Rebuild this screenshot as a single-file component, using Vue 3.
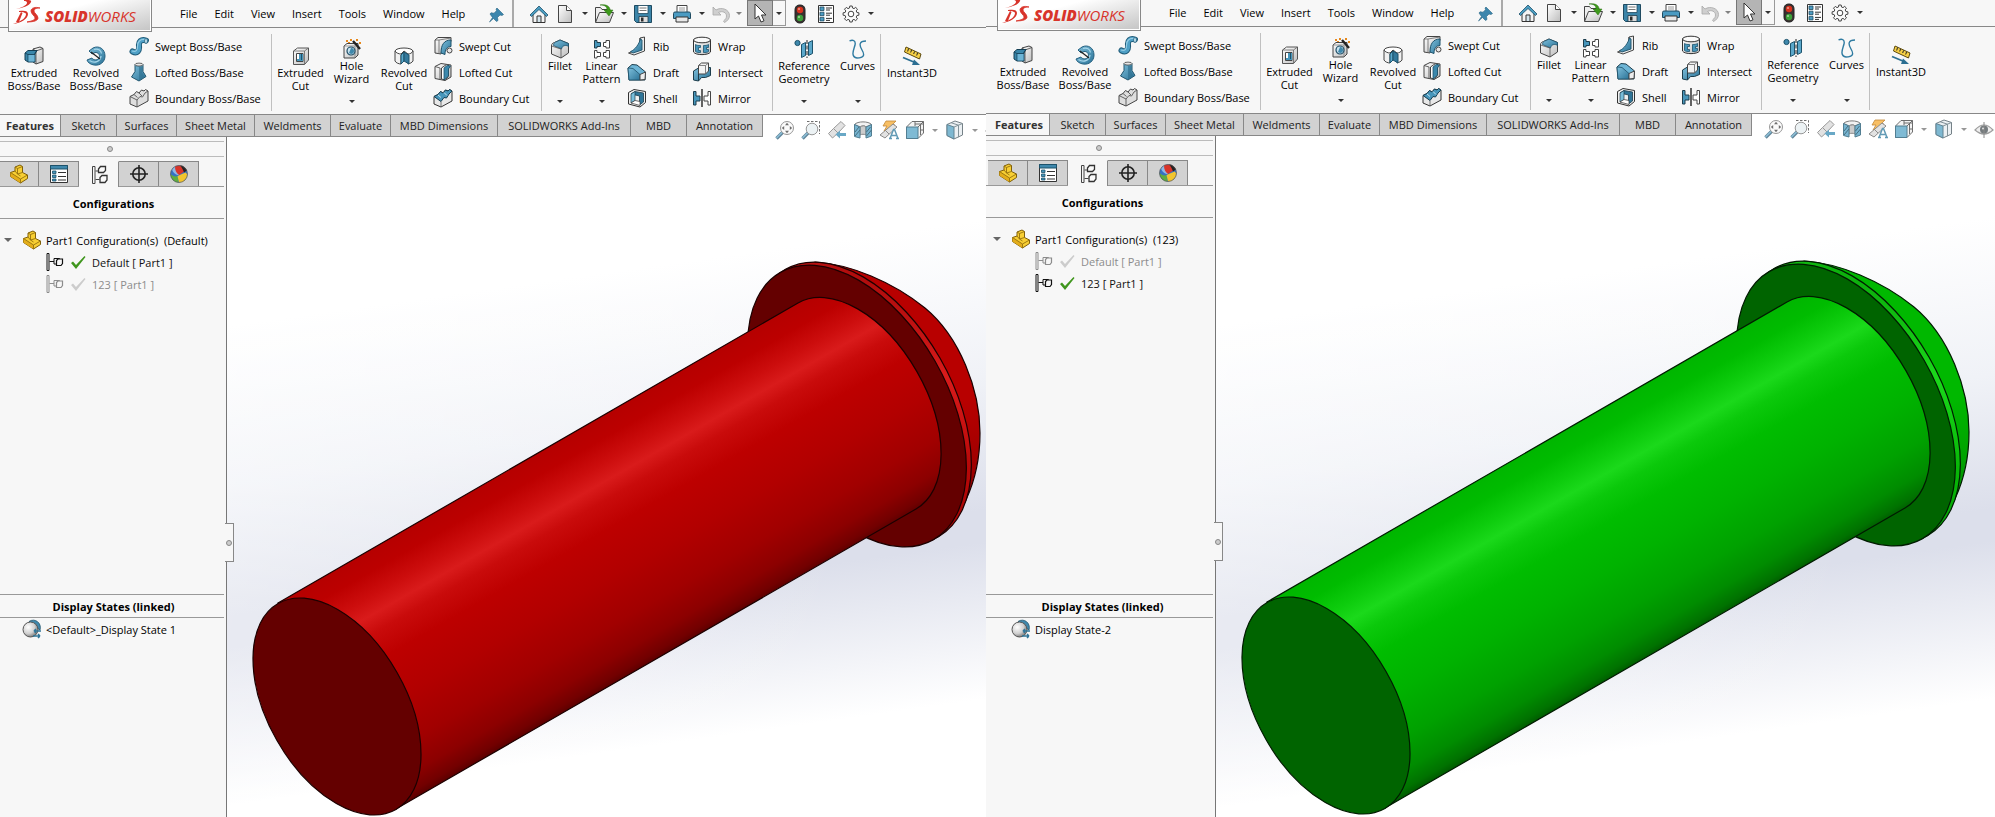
<script setup>
const menus = ['File', 'Edit', 'View', 'Insert', 'Tools', 'Window', 'Help']

const quick = [
  { icon: 'home', label: 'Home' },
  { icon: 'new', label: 'New', drop: true },
  { icon: 'open', label: 'Open', drop: true },
  { icon: 'save', label: 'Save', drop: true },
  { icon: 'print', label: 'Print', drop: true },
  { icon: 'undo', label: 'Undo', drop: true, off: true }
]

const ribbon = [
  {
    key: 'boss',
    items: [
      { icon: 'extrude', lines: ['Extruded', 'Boss/Base'] },
      { icon: 'revolve', lines: ['Revolved', 'Boss/Base'] },
      { list: [['sweep', 'Swept Boss/Base'], ['loft', 'Lofted Boss/Base'], ['boundary', 'Boundary Boss/Base']] }
    ]
  },
  {
    key: 'cut',
    items: [
      { icon: 'extrude-cut', lines: ['Extruded', 'Cut'] },
      { icon: 'hole', lines: ['Hole', 'Wizard'], drop: true },
      { icon: 'revolve-cut', lines: ['Revolved', 'Cut'] },
      { list: [['sweep-cut', 'Swept Cut'], ['loft-cut', 'Lofted Cut'], ['boundary-cut', 'Boundary Cut']] }
    ]
  },
  {
    key: 'feature',
    items: [
      { icon: 'fillet', lines: ['Fillet'], drop: true },
      { icon: 'pattern', lines: ['Linear', 'Pattern'], drop: true },
      { list: [['rib', 'Rib'], ['draft', 'Draft'], ['shell', 'Shell']] },
      { list: [['wrap', 'Wrap'], ['intersect', 'Intersect'], ['mirror', 'Mirror']] }
    ]
  },
  {
    key: 'reference',
    items: [
      { icon: 'geometry', lines: ['Reference', 'Geometry'], drop: true },
      { icon: 'curves', lines: ['Curves'], drop: true }
    ]
  },
  { key: 'instant', items: [{ icon: 'instant', lines: ['Instant3D'] }] }
]

const tabs = [
  ['features', 'Features'], ['sketch', 'Sketch'], ['surfaces', 'Surfaces'], ['sheet', 'Sheet Metal'],
  ['weld', 'Weldments'], ['evaluate', 'Evaluate'], ['dim', 'MBD Dimensions'],
  ['addins', 'SOLIDWORKS Add-Ins'], ['mbd', 'MBD'], ['annotation', 'Annotation']
]

const hud = [
  { icon: 'zoom-fit', label: 'Zoom to Fit' },
  { icon: 'zoom-area', label: 'Zoom to Area' },
  { icon: 'previous', label: 'Previous View' },
  { icon: 'section', label: 'Section View' },
  { icon: 'dynamic', label: 'Dynamic Annotation Views' },
  { icon: 'orient', label: 'View Orientation', drop: true },
  { icon: 'style', label: 'Display Style', drop: true },
  { icon: 'eye', label: 'Hide/Show Items' }
]

const panelTabs = [
  ['part', 'Feature Tree'], ['props', 'Property Manager'], ['config', 'Configuration Manager'],
  ['target', 'Dimension Manager'], ['ball', 'Display Manager']
]

const windows = [
  {
    id: 'red', current: 'Default', state: '<Default>_Display State 1',
    face: '#640000', line: '#1c0000', rim: '#b80808', dome: '#b80000', domeEnd: '#8c0000',
    stops: [[0, '#b60000'], [0.08, '#bc0000'], [0.17, '#cc0d0d'], [0.24, '#d91b1b'], [0.31, '#c90b0b'], [0.42, '#bd0000'], [0.6, '#b20000'], [0.78, '#a10000'], [0.9, '#8c0000'], [0.97, '#720000'], [1, '#5a0000']]
  },
  {
    id: 'green', current: '123', state: 'Display State-2',
    face: '#006400', line: '#001c00', rim: '#08b808', dome: '#00b800', domeEnd: '#008c00',
    stops: [[0, '#00b600'], [0.08, '#00bc00'], [0.17, '#0dcc0d'], [0.24, '#1bd91b'], [0.31, '#0bc90b'], [0.42, '#00bd00'], [0.6, '#00b200'], [0.78, '#00a100'], [0.9, '#008c00'], [0.97, '#007200'], [1, '#005a00']]
  }
]
const configs = ['Default', '123']
</script>

<template>
  <svg class="symbols" aria-hidden="true">
    <defs>
      <linearGradient id="blueFill" x1="0" y1="0" x2="1" y2="1">
        <stop offset="0" stop-color="#7fc0dc" /><stop offset="1" stop-color="#2b7397" />
      </linearGradient>
      <linearGradient id="greyFill" x1="0" y1="0" x2="1" y2="1">
        <stop offset="0" stop-color="#ffffff" /><stop offset="1" stop-color="#bdbdbd" />
      </linearGradient>
      <radialGradient id="sphere" cx=".35" cy=".35" r=".7">
        <stop offset="0" stop-color="#ffffff" /><stop offset=".6" stop-color="#d0d0d0" /><stop offset="1" stop-color="#777777" />
      </radialGradient>
    </defs>

    <symbol id="home" viewBox="0 0 20 20">
      <path d="M4 10v8.500h12V10l-6-6z" fill="#f4f4f4" stroke="#333" />
      <path d="M8 18v-6h4v6" fill="#d5e6ee" stroke="#333" />
      <path d="M1 11l9-9 9 9-1.500 1.500L10 5.500 2.500 12.500z" fill="#4a9cc0" stroke="#1d4f69" stroke-width=".8" />
    </symbol>
    <symbol id="new" viewBox="0 0 20 20">
      <path d="M3.500 1.500h8l5 5v12h-13z" fill="url(#greyFill)" stroke="#444" /><path d="M11.500 1.500v5h5" fill="#fff" stroke="#444" />
    </symbol>
    <symbol id="open" viewBox="0 0 20 20">
      <path d="M1.500 18V3.500h5l1.500 2h8V9" fill="#eee" stroke="#444" />
      <path d="M1.500 18.500l4-10h14l-4 10z" fill="url(#greyFill)" stroke="#444" />
      <path d="M6 1c4 0 7 1 7 5h-3l5 6 4-6h-3c0-4-4-6-10-5z" fill="#3e9a1c" stroke="#2b7012" stroke-width=".5" />
    </symbol>
    <symbol id="save" viewBox="0 0 20 20">
      <path d="M1.500 1.500h17v17H3.500l-2-2z" fill="#3b84a8" stroke="#1f4a60" />
      <path d="M5 1.500h10v8H5z" fill="#fff" stroke="#1f4a60" stroke-width=".8" /><path d="M6.500 4h7M6.500 6.500h7" stroke="#777" />
      <path d="M6 12.500h9v6H6z" fill="#ddd" stroke="#1f3a48" stroke-width=".8" /><path d="M8 13.500h2.500v4H8z" fill="#2a2a2a" />
    </symbol>
    <symbol id="print" viewBox="0 0 20 20">
      <path d="M5 9V1.500h10V9" fill="#fff" stroke="#444" /><path d="M7 4h6M7 6h6" stroke="#999" />
      <path d="M1.500 9.500q0-1.500 1.500-1.500h14q1.500 0 1.500 1.500v5h-17z" fill="#4b9bc2" stroke="#1f4a60" />
      <path d="M4 13h12v5H4z" fill="#e8e8e8" stroke="#333" />
    </symbol>
    <symbol id="undo" viewBox="0 0 20 20">
      <path d="M2 3v8h8L7.500 8.500c4-2 8 0 8 3.500 0 2-1 3.500-3 5l1 1.500c3-1.500 5-4 5-7C18.500 5.500 10.500 2.500 5 6z" fill="#cfcfcf" stroke="#a8a8a8" stroke-width=".8" />
    </symbol>
    <symbol id="cursor" viewBox="0 0 20 20">
      <path d="M5 1v15l3.500-3 2.500 6 3-1.200-2.500-5.800H16z" fill="#fff" stroke="#333" />
    </symbol>
    <symbol id="traffic" viewBox="0 0 20 20">
      <rect x="5" y="1" width="10" height="18" rx="4.500" fill="#3a3030" stroke="#222" />
      <circle cx="10" cy="6" r="3.200" fill="#d8321e" /><circle cx="10" cy="14" r="3.200" fill="#3ca13a" /><circle cx="9" cy="5" r="1" fill="#f09a8c" /><circle cx="9" cy="13" r="1" fill="#a4dca0" />
    </symbol>
    <symbol id="options" viewBox="0 0 20 20">
      <path d="M2.500 1.500h15v17h-15z" fill="#fff" stroke="#333" /><path d="M4 3h4v3.500H4zM4 8.200h4v3.500H4zM4 13.400h4v3.500H4z" fill="#4b9bc2" stroke="#1f4a60" stroke-width=".8" />
      <path d="M10 4h6M10 6h4M10 9.200h6M10 11.200h4M10 14.400h6M10 16.400h4" stroke="#333" />
    </symbol>
    <symbol id="gear" viewBox="0 0 20 20">
      <path d="M8.500 4l.3-2h2.400l.3 2 1.500.6 1.700-1.200 1.800 1.800-1.300 1.700.7 1.600 2 .3v2.400l-2 .3-.7 1.600 1.300 1.700-1.800 1.800-1.700-1.200-1.500.6-.3 2H8.800l-.3-2-1.500-.6-1.700 1.200-1.800-1.800 1.300-1.700-.7-1.600-2-.3V8.800l2-.3.7-1.600-1.300-1.700 1.800-1.800L7 4.600z" fill="#fbfbfb" stroke="#444" />
      <circle cx="10" cy="10" r="2.800" fill="#fff" stroke="#444" />
    </symbol>
    <symbol id="pin" viewBox="0 0 20 20">
      <path d="M10 4l6.500 6.500-1.500 1-2-.5-2.500 2.500.5 3-1.500 1-3-3-4 3.500 3-4.500L3 10l1-1.200 3 .4 2.500-2.500L9 5z" fill="#3c86ad" stroke="#286583" stroke-width=".6" />
    </symbol>

    <symbol id="extrude" viewBox="0 0 20 20">
      <path d="M9 3l7-2 3 1.500v13L12 18l-3-2z" fill="url(#greyFill)" stroke="#444" /><path d="M12 18V5l7-2.500M12 5L9 3" fill="none" stroke="#444" stroke-width=".8" />
      <path d="M1 7l3-2.500h9L11 7v9H4l-3-2z" fill="#3a87ab" stroke="#153f54" /><path d="M1 7l3 1.500h7M4 8.500V16M11 8l2-3.500" fill="none" stroke="#153f54" stroke-width=".8" /><path d="M4.500 9h6v6.500h-6z" fill="#6db5d6" />
    </symbol>
    <symbol id="revolve" viewBox="0 0 20 20">
      <path d="M7 2C13-1 19 3 19 10c0 6-5 10-11 9-4-.5-6.500-3-7-5l5-2c1 2 5 3 7 0 1.500-3-1-6-4-5.500L6 8 3 5z" fill="url(#blueFill)" stroke="#246080" />
      <path d="M3.500 14.500c5 3.500 11 1 11.500-4.500M8 3.500c4-1.500 7 1 7.500 4" fill="none" stroke="#a6d6ea" stroke-width="1.300" /><path d="M5 6l9 7" stroke="#222" stroke-width="1.300" />
    </symbol>
    <symbol id="sweep" viewBox="0 0 20 20">
      <path d="M3.500 15.500c5 2.500 7-1 6.500-5.500S12 3 17 4.500" fill="none" stroke="#1f5b78" stroke-width="6" stroke-linecap="round" />
      <path d="M3.500 15.500c5 2.500 7-1 6.500-5.500S12 3 17 4.500" fill="none" stroke="#4fa0c6" stroke-width="4" stroke-linecap="round" />
      <path d="M3 15c4 1.500 5.500-1 5.500-5S11 2.800 16 3.500" fill="none" stroke="#94cce4" stroke-width="1.200" /><ellipse cx="17" cy="5" rx="1.500" ry="2.500" fill="#bfe0ee" stroke="#1f5b78" stroke-width=".7" />
    </symbol>
    <symbol id="loft" viewBox="0 0 20 20">
      <path d="M6 2.500v7L2.500 15 10 19l7-4.500L14 9.500v-7z" fill="url(#blueFill)" stroke="#22566f" /><ellipse cx="10" cy="2.600" rx="4" ry="1.500" fill="#e6e6e6" stroke="#444" stroke-width=".8" />
      <path d="M10 5v13.500L15.500 15 13 10V4.500z" fill="#2c6c8c" opacity=".6" />
    </symbol>
    <symbol id="boundary" viewBox="0 0 20 20">
      <path d="M1 8.500l4-2 2.500-3L10 5l2.500-3L15 3l1.500-1.500L19 3v10L8 19l-7-3z" fill="#dedede" stroke="#444" />
      <path d="M1 8.500L8 12l3-3.500 2.500.5 2.500-4 3-2M8 12v7M5 6.500l3.500 3M10 5l3 3" fill="none" stroke="#555" stroke-width=".9" />
    </symbol>
    <symbol id="boundary-cut" viewBox="0 0 20 20">
      <path d="M1 8.500l4-2 2.500-3L10 5l2.500-3L15 3l1.500-1.500L19 3v10L8 19l-7-3z" fill="#e8e8e8" stroke="#333" />
      <path d="M1 8.500l4-2 2.500-3L10 5l2.500-3L15 3l1.500-1.500L19 3l-3 3-2.500 4-2.500-.5-3 4z" fill="#4796bb" stroke="#173f52" />
      <path d="M5 7l3 2.500M11 4.500l3 3" stroke="#c6e4f1" /><path d="M8 13.500V19" fill="none" stroke="#555" stroke-width=".8" />
    </symbol>
    <symbol id="extrude-cut" viewBox="0 0 20 20">
      <path d="M2.500 5l4-3h11v12l-4 4.500h-11z" fill="url(#greyFill)" stroke="#555" /><path d="M2.500 5h11v13.500M13.500 5l4-3" fill="none" stroke="#666" stroke-width=".8" />
      <path d="M5.500 7.500h6.500v8H5.500z" fill="#fff" stroke="#444" /><path d="M8 8v5H6v2h6V8z" fill="#4796bb" /><path d="M10.500 8v6" stroke="#1e526b" />
    </symbol>
    <symbol id="hole" viewBox="0 0 20 20">
      <path d="M2 7l3-2.500h11V16l-3 3H2z" fill="url(#greyFill)" stroke="#444" /><path d="M2 7h11v12" fill="none" stroke="#777" stroke-width=".7" />
      <circle cx="9" cy="12" r="4" fill="#c9e3ef" stroke="#1e4d66" stroke-width="1.200" /><path d="M9 9a3 3 0 010 6l-2-1z" fill="#3f88ac" />
      <path d="M11 2l7 8" stroke="#222" stroke-width="2.400" /><path d="M4 1h2v2H4zM8 0h2v2H8zM14 0h2v2h-2zM17 3h2v2h-2zM6 3h2v1H6z" fill="#e8891c" />
    </symbol>
    <symbol id="revolve-cut" viewBox="0 0 20 20">
      <path d="M1 5v10c1 2 4 3 6 3V9l3-3 4 3v9c2-.5 4-1.500 5-3V5z" fill="#f1f1f1" stroke="#444" /><path d="M1 5c1-4 17-4 18 0-1 2-3 3-5 3l-4-3-3 3C5 8 2 7 1 5z" fill="#fff" stroke="#444" />
      <path d="M7 9l3-3v9l-3 3z" fill="#5aa9cc" stroke="#1d526b" /><path d="M10 6l5 3v9l-5-3z" fill="#33799c" stroke="#1d526b" />
    </symbol>
    <symbol id="sweep-cut" viewBox="0 0 20 20">
      <path d="M2 4l3-2.500h13v4l-4 2-5 5-1 5.500-6-1z" fill="url(#greyFill)" stroke="#444" /><path d="M2 4h4v14M6 4l12-2" fill="none" stroke="#666" stroke-width=".8" />
      <path d="M18 4c-7 0-10 5-10 13l4 1.500c0-5 2-8 6-8z" fill="url(#blueFill)" stroke="#1d526b" /><circle cx="16.500" cy="14.500" r="2.500" fill="#e8e8e8" stroke="#444" />
    </symbol>
    <symbol id="loft-cut" viewBox="0 0 20 20">
      <path d="M2 4.500l6-3 10 1.500v12l-6 3.500-10-2z" fill="url(#greyFill)" stroke="#444" /><path d="M2 4.500l5 1.500v12M12 6v12" fill="none" stroke="#555" stroke-width=".9" />
      <path d="M8.500 6l5-3.500 2 .500v11l-3 4-4-1z" fill="#fff" stroke="#444" /><path d="M11 6l3-2.500 3.500.5-2 3v7L11 18z" fill="#3c88ac" stroke="#1d526b" stroke-width=".8" />
    </symbol>
    <symbol id="fillet" viewBox="0 0 20 20">
      <path d="M1.500 7c0-2 1-3 3-3.500L10 1l8.500 3.500V14L11 19l-9.500-4z" fill="url(#greyFill)" stroke="#444" />
      <path d="M7 2.500L10 1l8.500 3.500v3C16 5.500 12 6.500 11.500 10l-8-3.500C3.500 4 5 3 7 2.500z" fill="url(#blueFill)" stroke="#1d526b" stroke-width=".8" /><path d="M11 19v-9L1.500 7" fill="none" stroke="#555" stroke-width=".8" />
    </symbol>
    <symbol id="pattern" viewBox="0 0 20 20">
      <path d="M2.500 1.500H5v2h3.500v4H5v1.500H2.500z" fill="#4796bb" stroke="#1d3d4c" />
      <path d="M11.500 3.500H14v-2h3.500V9H14V7.500h-2.500zM2.500 11.500H5v2h3.500v4H5v1.500H2.500zM11.500 13.500H14v-2h3.500V19H14v-1.500h-2.500z" fill="#fff" stroke="#444" />
    </symbol>
    <symbol id="rib" viewBox="0 0 20 20">
      <path d="M13 2l4.500-1v14L7 19l-5.500-2L13 13z" fill="#ececec" stroke="#444" /><path d="M13 2v11" stroke="#444" />
      <path d="M13.500 3L15 4v10l-9 3-2.500-1.500C8 14 12 8 13.500 3z" fill="url(#blueFill)" stroke="#1d526b" stroke-width=".9" />
    </symbol>
    <symbol id="draft" viewBox="0 0 20 20">
      <path d="M1 6l4-3.500 5 .5 8.500 7-.5 8H2z" fill="#6db5d6" stroke="#1d3d4c" /><path d="M1 6l5 .5 7 6v5.500H2z" fill="url(#blueFill)" stroke="#1d526b" stroke-width=".8" /><path d="M13 12.500l5.500-2.500-.5 7.500-5 .5z" fill="#ededed" stroke="#444" />
    </symbol>
    <symbol id="shell" viewBox="0 0 20 20">
      <path d="M1.500 4.500L7 1.500l11.500 2v11L13 19l-11.500-3z" fill="#f0f0f0" stroke="#333" /><path d="M4 6l4-2.500 8.500 1.500v9L12.500 17V8z" fill="#2f7598" stroke="#1d3d4c" stroke-width=".8" /><path d="M4 6v9l4-2.500V3.500z" fill="#78bdda" stroke="#1d3d4c" stroke-width=".7" /><path d="M8 12.500l5 1v4L4 15z" fill="#fff" stroke="#333" stroke-width=".7" />
    </symbol>
    <symbol id="wrap" viewBox="0 0 20 20">
      <path d="M1.500 4v12c2 3.500 15 3.500 17 0V4z" fill="url(#greyFill)" stroke="#333" /><ellipse cx="10" cy="4" rx="8.500" ry="2.800" fill="#fafafa" stroke="#333" />
      <path d="M3.500 8.500c1.500 1 3 1 5 1v2H6.500v3h2v2c-2 0-4 0-5-1zM16.500 8.500c-1.500 1-3 1-5 1v7c2 0 4 0 5-1v-2h-2v-2h2z" fill="#4796bb" stroke="#1d526b" stroke-width=".8" />
    </symbol>
    <symbol id="intersect" viewBox="0 0 20 20">
      <path d="M1.500 9l5-3 12-.5v8l-5 2h-4l-3 3.500-5-1z" fill="url(#blueFill)" stroke="#1d3d4c" /><path d="M6.500 3.500l3-2.500h7v8l-3 3h-7z" fill="#f3f3f3" stroke="#444" /><path d="M6.500 3.500h7V12M13.500 3.500l3-2.500" fill="none" stroke="#666" stroke-width=".8" /><path d="M6.500 12v7" stroke="#1d3d4c" />
    </symbol>
    <symbol id="mirror" viewBox="0 0 20 20">
      <path d="M1.500 3.500H4V8h4v5H4v4H1.500z" fill="#4796bb" stroke="#1d3d4c" /><path d="M18.500 3.500H16V8h-4v5h4v4h2.500z" fill="#fff" stroke="#444" /><path d="M10 1v18" stroke="#111" stroke-width="1.300" />
    </symbol>
    <symbol id="geometry" viewBox="0 0 20 20">
      <circle cx="3.500" cy="4" r="2.600" fill="#3f88ac" stroke="#1d526b" /><path d="M7.500 5.500l4-2v13l-4 2zM14.500 3.500l4-2v13l-4 2z" fill="#5ba8cb" stroke="#1d526b" /><path d="M13 1v18" stroke="#222" stroke-dasharray="4 1.500" />
    </symbol>
    <symbol id="curves" viewBox="0 0 20 20">
      <path d="M1.500 2C5 0 8 2 7 6s-5 12 2 13c7 0 8-3 5-8s-3-9 4-9" fill="none" stroke="#2f7ba1" stroke-width="1.400" />
    </symbol>
    <symbol id="instant" viewBox="0 0 20 20">
      <path d="M4 1l15 7-1.500 5L2.500 6z" fill="#f5cf45" stroke="#5d4a10" /><path d="M6.500 2.500l-.8 3M9.500 4l-.8 2.500M12.500 5.500l-.8 2.500M15.500 7l-.8 2.500" stroke="#222" />
      <path d="M1 11.500l12 5" stroke="#2c6f92" stroke-width="1.800" /><path d="M12 13.500l6 5.500h-8z" fill="#2c6f92" />
    </symbol>

    <symbol id="zoom-fit" viewBox="0 0 20 20">
      <path d="M1.500 18.500l7-7" stroke="#46718a" stroke-width="3.400" /><path d="M1.500 18l7-7" stroke="#79b4d0" stroke-width="1.500" />
      <circle cx="12" cy="8" r="6.500" fill="#fbfbfb" stroke="#858585" /><path d="M12 2.800l2 2.400h-4zM12 13.200l2-2.400h-4zM6.800 8l2.400-2v4zM17.200 8l-2.400-2v4z" fill="#555" />
    </symbol>
    <symbol id="zoom-area" viewBox="0 0 20 20">
      <path d="M6 1.500h12.500V14" fill="none" stroke="#555" stroke-dasharray="2.500 1.500" /><path d="M1.500 18.500l7-7" stroke="#46718a" stroke-width="3.400" /><path d="M1.500 18l7-7" stroke="#79b4d0" stroke-width="1.500" />
      <circle cx="11" cy="9" r="5.800" fill="#e9f0f3" stroke="#858585" />
    </symbol>
    <symbol id="previous" viewBox="0 0 20 20">
      <path d="M1.500 13.500l5-5L14 1.500l4 4-6.500 7-6 5.500z" fill="#dedede" stroke="#888" /><path d="M6.500 8.500l4.500 4.500" stroke="#888" /><path d="M19 13h-6v-2.500L8.500 14.500 13 18.500V16h6z" fill="#4f9abd" />
    </symbol>
    <symbol id="section" viewBox="0 0 20 20">
      <path d="M1.500 4.500c3-3.500 14-3.500 17 0L13 7c-1-1.500-4-1.500-6 0z" fill="#f0f0f0" stroke="#666" /><path d="M7 7c2-1.500 5-1.500 6 0v8c-2-1-4-1-6 0z" fill="#c4c4c4" stroke="#777" />
      <path d="M1.500 4.500L7 7v11l-5.500-1.500zM13 7l5.500-2.500V16L13 18z" fill="#5fa8c9" stroke="#35687f" /><path d="M2 12l4-5M2 16l5-6M13.500 12l4-5M13.500 16l5-6" stroke="#265468" />
    </symbol>
    <symbol id="dynamic" viewBox="0 0 20 20">
      <path d="M7 1h10l-4 4h3L5 11l3-5H4z" fill="#f7b54a" stroke="#b97516" stroke-width=".8" /><path d="M1 15L14 4l4 3L6 18z" fill="#dedede" stroke="#777" /><path d="M6 10l4 4" stroke="#777" />
      <path d="M11 18.500l3.500-9h1l3.500 9M12 15.500h6M10 18.500h3M17 18.500h3" fill="none" stroke="#4689a9" stroke-width="1.500" />
    </symbol>
    <symbol id="orient" viewBox="0 0 20 20">
      <path d="M1.500 7L7 1.500h11.500V13L13 18.500H1.500z" fill="#f1f1f1" stroke="#555" /><path d="M1.500 7H13v11.500H1.500z" fill="#69aecd" stroke="#35687f" /><path d="M13 7l5.500-5.500M10 1v5M10 4h8M15.500 5v10M15.500 10h3" fill="none" stroke="#555" />
    </symbol>
    <symbol id="style" viewBox="0 0 20 20">
      <path d="M2 4.500L10 1l7.500 2.500V15L9 19l-7-3.500z" fill="#e8eef1" stroke="#5d6c73" /><path d="M2 4.500L9 7v12l-7-3.500z" fill="#68acca" stroke="#466e80" /><path d="M9 7l8.500-3.500M6 2.700l7.500 2.500v12" fill="none" stroke="#6d7f87" />
    </symbol>
    <symbol id="eye" viewBox="0 0 20 20">
      <path d="M1 11q9-10 18 0-9 8-18 0z" fill="#ececec" stroke="#8d8d8d" stroke-width="1.200" /><circle cx="10" cy="10.500" r="4" fill="#5e6468" /><path d="M10 3v16" stroke="#777" /><circle cx="9" cy="9.500" r="1" fill="#ddd" />
    </symbol>

    <symbol id="part" viewBox="0 0 20 20">
      <path d="M6 3l5-2 2.500 1.500v6l5 2.500v3.500L11.500 19 1.500 12.500V8.500L6 7z" fill="#f8cf33" stroke="#80600a" stroke-linejoin="round" />
      <path d="M1.500 8.500L11.500 15v4l-10-6.500z" fill="#e3ad1b" /><path d="M8.500 4.500V10l3 2M8.500 4.500l5-2M6 3l2.500 1.500M6 7l2.500 3M1.500 8.500l10 6.500v4M11.500 15l7-4M8.500 10l5-1.500" fill="none" stroke="#94710f" stroke-width=".9" />
    </symbol>
    <symbol id="props" viewBox="0 0 20 20">
      <path d="M1.500 1.500h17v17h-17z" fill="#fff" stroke="#333" /><path d="M1.500 1.500h17V5h-17z" fill="#3f88ac" stroke="#1d526b" /><path d="M3.500 7h3.500v2.500H3.500zM3.500 11h3.500v2.500H3.500zM3.500 15h3.500v2H3.500z" fill="#4796bb" stroke="#1d526b" stroke-width=".8" /><path d="M9 8.500h8M9 12.500h8M9 16h8" stroke="#333" />
    </symbol>
    <symbol id="config" viewBox="0 0 20 20">
      <path d="M3.500 1.500h2.500v17H3.500zM6.500 6h3.500M6.500 14.500h4" fill="none" stroke="#444" /><path d="M9.500 4l2-2.500h5v4l-2 2h-5zM11 12.500l2-2h5v4.500l-2 2.500h-5z" fill="#fafafa" stroke="#333" stroke-width="1.300" />
    </symbol>
    <symbol id="config-item" viewBox="0 0 20 20">
      <path d="M3 1.500h2v17H3zM5.500 9.500H10" fill="none" stroke="currentColor" /><path d="M10 6.500h5.500V12H10z" fill="#f7f7f7" stroke="currentColor" /><path d="M12.500 8.500l1.500-1.500h4.500v4.500L17 13.500h-4.500z" fill="#f7f7f7" stroke="currentColor" stroke-width="1.200" />
    </symbol>
    <symbol id="check" viewBox="0 0 20 20">
      <path d="M3 11l2-1.500 3 3.500L16.500 4l1 1L8 17z" fill="currentColor" />
    </symbol>
    <symbol id="target" viewBox="0 0 20 20">
      <circle cx="10" cy="10" r="6.200" fill="none" stroke="#222" stroke-width="1.600" /><path d="M10 1v18M1 10h18" stroke="#222" stroke-width="1.600" />
    </symbol>
    <symbol id="ball" viewBox="0 0 20 20">
      <circle cx="10" cy="10" r="8.500" fill="#3771c4" /><path d="M10 1.500A8.500 8.500 0 003 5c1 4 4 6 7 6V1.500z" fill="#8fb8e6" /><path d="M6 2.500c4-2 9-1 11.500 3.500L10 11C7 9 6 6 6 2.500z" fill="#d9342a" /><path d="M11 1.500c3 0 6 2 7 5l-3 2c-1-3-2-5-4-7z" fill="#222" /><path d="M1.500 10c2 2 5 3 7 2l1 6.500C5 18 2 15 1.500 10z" fill="#5fae3f" /><path d="M8.500 12l8-3.500 2 2c-.5 4.500-4 8-8.500 8z" fill="#f2c52e" /><circle cx="10" cy="10" r="8.500" fill="none" stroke="#555" stroke-width=".7" />
    </symbol>
    <symbol id="state" viewBox="0 0 20 20">
      <path d="M7 2.500C13-1.500 20 4 18 11l-6-4z" fill="#3f88ac" stroke="#1d526b" stroke-width=".8" /><circle cx="8.500" cy="10.500" r="7.500" fill="url(#sphere)" stroke="#555" /><path d="M12 12h7M12 12l2-2M12 12l2 2M11 17h7M18 17l-2-2M18 17l-2 2" fill="none" stroke="#2f7598" stroke-width="1.500" />
    </symbol>
  </svg>

  <main class="screen">
    <section v-for="w in windows" :key="w.id" class="window" :class="w.id" :aria-label="'SOLIDWORKS ' + w.id">
      <header class="titlebar">
        <div class="logo">
          <svg class="mark" viewBox="0 0 28 26" aria-hidden="true">
            <path d="M11 0c5 0 8 0 7 2-1 3-6 5-10 6l-5 1c5-1 11-4 11-6 0-1.500-1-2-3-2z" fill="#d8342b" />
            <path d="M6 11c6-1 9 0 9 3 0 5-7 9-15 10l5-2c5-2 8-5 8-8 0-1-2-2-7-2z" fill="#d8342b" />
            <path d="M3 22L8 12l1.500 1L6 22z" fill="#d8342b" />
            <path d="M27 8c-4 0-6 1-6 3s4 4 4 7c0 2.500-4 4-11 4 5-1 8-2 8-4s-4-4-4-7c0-3 4-4.500 9-3z" fill="#d8342b" stroke="#d8342b" stroke-width=".8" />
          </svg>
          <span class="wordmark"><b>SOLID</b><span>WORKS</span></span>
        </div>
        <nav class="menus">
          <button v-for="m in menus" :key="m" type="button">{{ m }}</button>
        </nav>
        <button class="pin" type="button" aria-label="Pin menu"><svg class="icon"><use href="#pin" /></svg></button>
        <div class="quick">
          <template v-for="q in quick" :key="q.icon">
            <button type="button" :aria-label="q.label" :class="'q-' + q.icon"><svg class="icon"><use :href="'#' + q.icon" /></svg></button>
            <button v-if="q.drop" type="button" class="more" :class="{ off: q.off }" :aria-label="q.label + ' options'"><i class="caret"></i></button>
          </template>
          <button type="button" class="select" aria-label="Select"><svg class="icon"><use href="#cursor" /></svg></button>
          <button type="button" class="select-more" aria-label="Select options"><i class="caret"></i></button>
          <button type="button" class="q-traffic" aria-label="Rebuild"><svg class="icon"><use href="#traffic" /></svg></button>
          <button type="button" class="q-options" aria-label="File properties"><svg class="icon"><use href="#options" /></svg></button>
          <button type="button" aria-label="Options"><svg class="icon"><use href="#gear" /></svg></button>
          <button type="button" class="more" aria-label="Options menu"><i class="caret"></i></button>
        </div>
      </header>

      <div class="ribbon">
        <div v-for="g in ribbon" :key="g.key" class="group" :class="g.key">
          <template v-for="(it, i) in g.items" :key="i">
            <div v-if="it.list" class="list">
              <button v-for="row in it.list" :key="row[0]" type="button"><svg class="icon"><use :href="'#' + row[0]" /></svg><span>{{ row[1] }}</span></button>
            </div>
            <button v-else type="button" class="big" :class="{ drop: it.drop }">
              <svg class="icon"><use :href="'#' + it.icon" /></svg>
              <span v-for="l in it.lines" :key="l">{{ l }}</span>
              <i v-if="it.drop" class="caret"></i>
            </button>
          </template>
        </div>
      </div>

      <div class="tabbar">
        <nav class="tabs">
          <button v-for="t in tabs" :key="t[0]" type="button" :class="['t-' + t[0]]">{{ t[1] }}</button>
        </nav>
        <div class="hud">
          <template v-for="h in hud" :key="h.icon">
            <button type="button" :aria-label="h.label"><svg class="icon"><use :href="'#' + h.icon" /></svg></button>
            <button v-if="h.drop" type="button" class="hud-more" :aria-label="h.label + ' menu'"><i class="caret"></i></button>
          </template>
        </div>
      </div>

      <div class="body">
        <aside class="panel">
          <div class="splitter"><i class="dot"></i></div>
          <nav class="panel-tabs">
            <button v-for="p in panelTabs" :key="p[0]" type="button" :class="{ active: p[0] === 'config' }" :aria-label="p[1]"><svg class="icon"><use :href="'#' + p[0]" /></svg></button>
          </nav>
          <h2 class="heading">Configurations</h2>
          <ul class="tree">
            <li class="root">
              <i class="caret"></i>
              <svg class="icon"><use href="#part" /></svg>
              <span>Part1 Configuration(s)&nbsp; ({{ w.current }})</span>
            </li>
            <li v-for="c in configs" :key="c" class="leaf" :class="{ active: c === w.current }">
              <svg class="icon"><use href="#config-item" /></svg>
              <svg class="icon tick"><use href="#check" /></svg>
              <span>{{ c }} [ Part1 ]</span>
            </li>
          </ul>
          <h2 class="heading states">Display States (linked)</h2>
          <div class="state-row"><svg class="icon"><use href="#state" /></svg><span>{{ w.state }}</span></div>
          <div class="handle"><i class="dot"></i></div>
        </aside>

        <div class="viewport">
          <svg class="model" role="img" :aria-label="'Rivet model in ' + w.id">
            <defs>
              <linearGradient :id="'barrel-' + w.id" gradientUnits="userSpaceOnUse" x1="278" y1="603" x2="396" y2="809">
                <stop v-for="s in w.stops" :key="s[0]" :offset="s[0]" :stop-color="s[1]" />
              </linearGradient>
              <linearGradient :id="'dome-' + w.id" gradientUnits="userSpaceOnUse" x1="900" y1="300" x2="970" y2="520">
                <stop offset="0" :stop-color="w.dome" /><stop offset=".5" :stop-color="w.dome" /><stop offset="1" :stop-color="w.domeEnd" />
              </linearGradient>
              <linearGradient :id="'rim-' + w.id" gradientUnits="userSpaceOnUse" x1="800" y1="262" x2="970" y2="530">
                <stop offset="0" :stop-color="w.domeEnd" /><stop offset=".28" :stop-color="w.stops[3][1]" /><stop offset=".5" :stop-color="w.rim" /><stop offset="1" :stop-color="w.domeEnd" />
              </linearGradient>
            </defs>
            <g transform="translate(-227 -137)" :stroke="w.line" stroke-width="1.200">
              <path :fill="`url(#dome-${w.id})`" d="M815 262C850 264 893 282 925 308C960 337 980 390 980 433C980 478 962 528 924 543L880 460L800 300Z" />
              <ellipse :fill="`url(#rim-${w.id})`" cx="862" cy="403" rx="154" ry="90" transform="rotate(60.200 862 403)" />
              <ellipse :fill="w.face" cx="857" cy="406" rx="154" ry="90" transform="rotate(60.200 857 406)" />
              <path :fill="`url(#barrel-${w.id})`" d="M278 603L798 303A118.600 69 60.200 0 1 916 509L396 809Z" />
              <ellipse :fill="w.face" cx="337" cy="706.500" rx="118.600" ry="69" transform="rotate(60.200 337 706.500)" />
            </g>
          </svg>
        </div>
      </div>
    </section>
  </main>
</template>

<style>
body { margin: 0; overflow: hidden; }
</style>

<style scoped>
.symbols { position: absolute; width: 0; height: 0; }
.screen {
  display: flex;
  height: 100vh;
  overflow: hidden;
  font-family: "Open Sans", "Noto Sans", sans-serif;
  font-size: 11px;
  line-height: 13px;
  color: #000;
}
button { margin: 0; padding: 0; border: 0; background: none; font: inherit; color: inherit; white-space: nowrap; }
.icon { display: block; flex: none; width: 20px; height: 20px; }
.caret { display: block; width: 0; border: 3px solid transparent; border-top-color: #333; border-bottom: 0; }

.window { --inset: 0px; display: flex; flex-direction: column; flex: 986 1 0; min-width: 0; overflow: hidden; background: #f7f7f7; }
.window.green { --inset: 3px; flex-grow: 1009; margin-top: -1px; }

.titlebar { display: flex; align-items: center; height: 27px; padding-left: var(--inset); border-bottom: 1px solid #888; flex: none; }
.logo {
  display: flex; align-items: flex-start; align-self: flex-start; flex: none;
  box-sizing: border-box; width: 144px; height: 32px; margin-left: 8px; padding-left: 4px;
  border: 1px solid #888; border-top: 0; box-shadow: inset -1px -1px 0 #fff;
  background: linear-gradient(165deg, #fff 35%, #e4e4e4 65%, #c4c4c4);
  position: relative; z-index: 1;
}
.mark { width: 28px; height: 26px; }
.wordmark { display: flex; margin-top: 6px; font-size: 15px; line-height: 20px; font-style: italic; color: #d8342b; margin-left: 4px; }
.wordmark b { font-weight: 800; }
.wordmark span { font-weight: 400; }
.menus { display: flex; flex: none; gap: 17px; margin-left: 28px; }
.pin { margin-left: 22px; }
.quick { display: flex; align-items: center; flex: none; height: 27px; margin-left: 5px; padding-left: 15px; border-left: 2px solid #aaa; }
.more { display: flex; justify-content: center; width: 19px; }
.more.off { width: 16px; opacity: .6; }
.q-home { margin-right: 6px; }
.select { display: flex; align-items: center; justify-content: center; align-self: flex-start; box-sizing: border-box; width: 26px; height: 26px; border: 1px solid #777; background: #b4b4b4; }
.select-more { display: flex; align-items: center; justify-content: center; align-self: flex-start; box-sizing: border-box; width: 13px; height: 26px; border: 1px solid #999; border-left: 0; }
.q-traffic { margin: 0 6px 0 4px; }
.q-options { margin-right: 5px; }

.ribbon { display: flex; flex: none; height: 86px; padding-left: var(--inset); }
.group { display: grid; margin: 6px 0 3px; border-left: 1px solid #c0c0c0; }
.group.boss { grid-template-columns: 62px 62px 144px; padding-left: 3px; border-left: 0; }
.group.cut { grid-template-columns: 51px 51px 54px 110px; padding-left: 3px; }
.group.feature { grid-template-columns: 36px 47px 65px 82px; }
.group.reference { grid-template-columns: 62px 45px; }
.group.instant { grid-template-columns: 62px; }
.big { display: flex; flex-direction: column; align-items: center; padding-top: 12px; }
.big.drop { padding: 5px 0 8px; }
.big .caret { margin-top: auto; }
.list { display: grid; grid-template-rows: repeat(3, 26px); margin-top: -1px; padding-left: 2px; }
.list button { display: flex; align-items: center; gap: 6px; text-align: left; }

.tabbar { display: flex; flex: none; box-sizing: border-box; height: 23px; border-top: 1px solid #888; background: #fff; position: relative; z-index: 1; }
.tabs { display: flex; flex: none; }
.tabs button { box-sizing: border-box; border-right: 1px solid #888; border-bottom: 1px solid #888; background: #d2d2d2; color: #222; }
.tabs .t-features { width: calc(61px + var(--inset)); padding-left: var(--inset); background: #f7f7f7; font-weight: 700; color: #333; }
.t-sketch { width: 56px; }
.t-surfaces { width: 60px; }
.t-sheet { width: 78px; }
.t-weld { width: 76px; }
.t-evaluate { width: 60px; }
.t-dim { width: 107px; }
.t-addins { width: 133px; }
.t-mbd { width: 56px; }
.t-annotation { width: 76px; }
.hud { display: flex; align-items: center; flex: none; gap: 6px; height: 20px; margin: 5px 0 0 12px; opacity: .85; }
.hud-more { display: flex; justify-content: center; width: 8px; opacity: .6; }

.body { display: flex; flex: 1; min-height: 0; }
.panel { position: relative; display: flex; flex-direction: column; flex: none; box-sizing: border-box; width: calc(227px + var(--inset)); padding-right: 2px; border-right: 1px solid #777; z-index: 1; }
.splitter { display: flex; align-items: center; justify-content: center; height: 14px; margin-top: 4px; padding: 0 4px 0 var(--inset); border: 1px solid #bbb; border-width: 1px 0; flex: none; }
.dot { display: block; width: 4px; height: 4px; border: 1px solid #888; border-radius: 50%; background: #ccc; }
.panel-tabs { display: flex; height: 25px; margin-top: 4px; border-bottom: 1px solid #999; flex: none; }
.green .panel-tabs { padding-left: 2px; }
.red .panel-tabs button:first-child { width: 39px; }
.panel-tabs button { display: flex; align-items: center; justify-content: center; box-sizing: border-box; width: 40px; height: 25px; border: 1px solid #888; border-width: 1px 1px 0 0; background: #d2d2d2; }
.panel-tabs .active { height: 26px; border-top-color: #f7f7f7; background: #f7f7f7; }
.heading { margin: 0; padding: 2px 0 0 calc(var(--inset) + 3px); font-size: 11px; line-height: 29px; font-weight: 700; text-align: center; border-bottom: 1px solid #999; }
.tree { flex: 1; margin: 0; padding: 10px 0 0 var(--inset); list-style: none; }
.tree li { display: flex; align-items: center; height: 22px; }
.root { padding-left: 4px; gap: 4px; }
.root .caret { border-width: 4px 4px 0; border-top-color: #666; margin-right: 6px; }
.leaf { padding-left: 44px; gap: 4px; color: #8c8c8c; }
.leaf.active { color: #111; }
.tick { color: #ccc; }
.leaf.active .tick { color: #3f961d; }
.states { border-top: 1px solid #999; line-height: 20px; }
.state-row { display: flex; align-items: center; gap: 4px; height: 22px; padding: 0 0 177px calc(var(--inset) + 22px); }
.handle { position: absolute; top: 386px; right: -8px; display: flex; align-items: center; justify-content: center; width: 8px; height: 37px; border: 1px solid #888; border-left: 0; background: #f7f7f7; }
.viewport {
  flex: 1; min-width: 0;
  background:
    linear-gradient(98deg, rgba(255,255,255,.4), rgba(255,255,255,0) 80%),
    linear-gradient(172deg, #fff 24%, #f0f2f7 44%, #dcdfeb 61%, #dcdfeb 65%, #fff 85%);
}
.model { display: block; width: 100%; height: 100%; }
</style>
